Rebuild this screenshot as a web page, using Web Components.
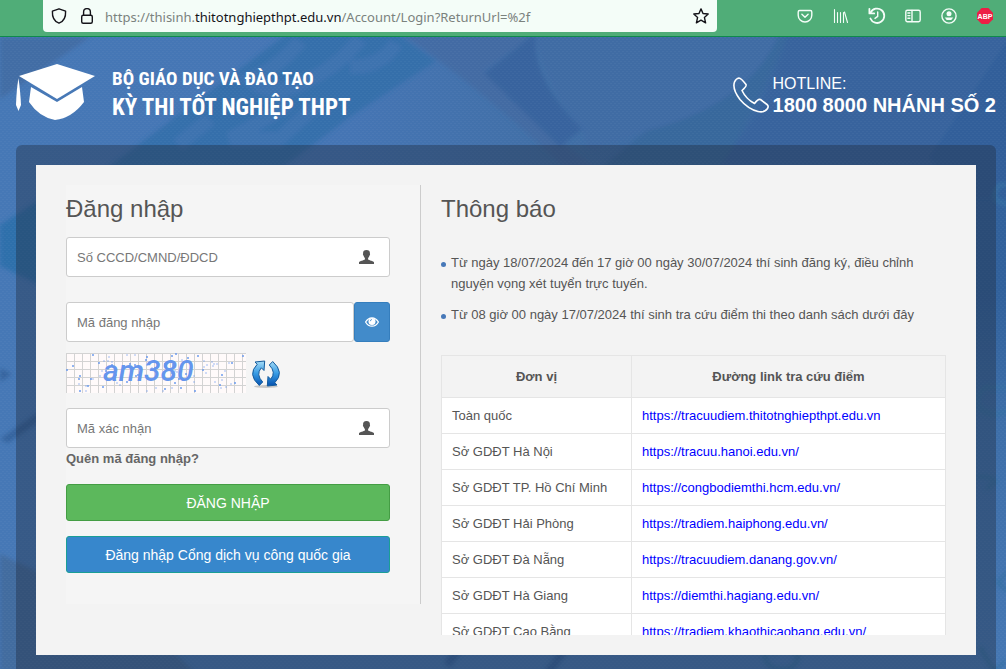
<!DOCTYPE html>
<html lang="vi">
<head>
<meta charset="utf-8">
<meta name="viewport" content="width=device-width, initial-scale=1">
<title>Kỳ thi tốt nghiệp THPT - Đăng nhập</title>
<style>
  html, body { margin: 0; height: 100%; }
  body {
    font: 13px/21px "Liberation Sans", Arial, sans-serif;
    color: #555;
    display: flex;
    flex-direction: column;
    overflow: hidden;
    --blue: #428bca;
    --line: #ccc;
  }
</style>
</head>
<body>
<browser-bar></browser-bar>
<exam-page>
  <site-header slot="header"></site-header>
  <login-form slot="login"></login-form>
  <notice-board slot="notice">
    <notice-item>Từ ngày 18/07/2024 đến 17 giờ 00 ngày 30/07/2024 thí sinh đăng ký, điều chỉnh nguyện vọng xét tuyển trực tuyến.</notice-item>
    <notice-item>Từ 08 giờ 00 ngày 17/07/2024 thí sinh tra cứu điểm thi theo danh sách dưới đây</notice-item>
    <score-links slot="links"></score-links>
  </notice-board>
</exam-page>

<script>
const define = (name, html, setup) => {
  customElements.define(name, class extends HTMLElement {
    constructor() {
      super();
      const t = document.createElement('template');
      t.innerHTML = html;
      this.attachShadow({ mode: 'open' }).append(t.content.cloneNode(true));
      if (setup) setup(this);
    }
  });
};

define('browser-bar', `
<style>
  :host { display: flex; align-items: flex-start; height: 36px; flex: none; padding-left: 43px;
    background: #50ad78; border-bottom: 1px solid #0f8a4c; box-sizing: content-box; }
  .url { flex: 1; min-width: 0; height: 32px; box-sizing: border-box; padding: 0 8px; display: flex; align-items: center; gap: 12px;
    background: #f4fdf8; border-radius: 0 0 4px 4px; color: #15141a; }
  .url svg { flex: none; }
  .text { flex: 1; min-width: 0; margin-left: -2px; padding-top: 2px; font: 13px/30px "Noto Sans", sans-serif; color: #7b827e; white-space: nowrap; overflow: hidden; }
  .text b { font-weight: 400; color: #15141a; }
  nav { flex: 0 0 289px; display: flex; justify-content: flex-end; align-items: center; gap: 16px; height: 32px; padding-right: 11px; box-sizing: border-box; }
  button { border: 0; padding: 0; background: none; width: 20px; height: 20px; display: grid; place-items: center; color: #f4fdf8; }
  svg { display: block; fill: none; stroke: currentColor; stroke-width: 1.4; stroke-linecap: round; stroke-linejoin: round; }
</style>
<div class="url">
  <svg width="16" height="16" viewBox="0 0 16 16"><path d="M8 .8 14.6 3.2C14.9 8.8 12.8 13.4 8 15.2 3.2 13.4 1.1 8.8 1.4 3.2Z"/></svg>
  <svg width="16" height="16" viewBox="0 0 16 16"><rect x="2.7" y="7.2" width="10.6" height="8" rx="1.5"/><path d="M4.6 7V4a3.4 3.4 0 0 1 6.8 0v3"/></svg>
  <span class="text">https://thisinh.<b>thitotnghiepthpt.edu.vn</b>/Account/Login?ReturnUrl=%2f</span>
  <svg width="16" height="16" viewBox="0 0 16 16"><path d="M8 .9 10 5.5 15.2 6 11.4 9.4 12.6 14.8 8 12.2 3.4 14.8 4.6 9.4.8 6 6 5.5Z"/></svg>
</div>
<nav aria-label="Trình duyệt">
  <button aria-label="Pocket"><svg width="16" height="16" viewBox="0 0 16 16"><path d="M2.6 2.5h10.8q1.4 0 1.4 1.4v3.3a6.8 6.8 0 0 1-13.6 0V3.9q0-1.4 1.4-1.4Z"/><path d="M4.9 6.3 8 9.3l3.1-3"/></svg></button>
  <button aria-label="Library"><svg width="16" height="16" viewBox="0 0 16 16"><path stroke-width="1.1" d="M1.500 1.500v13M4.500 4.500v10M7.500 4.500v10M10.500 4.500v10M11.500 4l3 10.500"/></svg></button>
  <button aria-label="History"><svg width="18" height="18" viewBox="0 0 18 18"><path stroke-width="1.8" d="M2.6 5.6A7.2 7.2 0 1 1 2.4 11.5"/><path stroke-width="1.8" d="M1.4 1.8v4.6h4.8"/><path d="M9.7 5v4.4L7 11.4"/></svg></button>
  <button aria-label="Sidebars"><svg width="16" height="16" viewBox="0 0 16 16"><rect x=".8" y="2.3" width="14.4" height="11.4" rx="1.6"/><path d="M7 2.5v11M2.9 5h2M2.9 7.6h2M2.9 10.2h2"/></svg></button>
  <button aria-label="Account"><svg width="16" height="16" viewBox="0 0 16 16"><circle cx="8" cy="8" r="7.1"/><circle cx="8" cy="5.8" r="2.5" fill="currentColor" stroke="none"/><path d="M3.7 9.4h8.6a4.6 4.2 0 0 1-8.6 0Z" fill="currentColor" stroke="none"/></svg></button>
  <button aria-label="Adblock Plus"><svg width="16" height="16" viewBox="0 0 16 16"><path d="M4.7 0h6.6L16 4.700v6.600L11.3 16H4.7L0 11.300V4.700Z" fill="#ed1e45" stroke="none"/><text x="8" y="10.600" text-anchor="middle" font-family="Liberation Sans, sans-serif" font-size="7" font-weight="700" fill="#fff" stroke="none">ABP</text></svg></button>
</nav>`);

define('photo-backdrop', `
<style>
  :host { display: block; position: absolute; inset: 0; z-index: -1; background: #4678b5; overflow: hidden; }
  svg { display: block; width: 100%; height: 100%; }
</style>
<svg viewBox="0 0 1006 632" preserveAspectRatio="xMidYMin slice" aria-hidden="true">
  <defs>
    <linearGradient id="base" x1="0" y1="0" x2="1" y2="0"><stop offset="0" stop-color="#4678b6"/><stop offset=".35" stop-color="#4575b4"/><stop offset=".55" stop-color="#416fa6"/><stop offset=".8" stop-color="#3a669f"/><stop offset="1" stop-color="#33629c"/></linearGradient>
    <linearGradient id="right" x1="0" y1="0" x2="0" y2="1"><stop offset="0" stop-color="#33629c"/><stop offset=".3" stop-color="#31619c"/><stop offset=".55" stop-color="#3e6fa9"/><stop offset="1" stop-color="#4678b4"/></linearGradient>
    <filter id="soft" x="-10%" y="-10%" width="120%" height="120%"><feGaussianBlur stdDeviation="2"/></filter>
    <pattern id="weave" width="4" height="4" patternUnits="userSpaceOnUse"><path d="M0 0h2v1H0zM2 2h2v1H2z" fill="#fff" opacity=".03"/></pattern>
  </defs>
  <rect width="1006" height="632" fill="url(#base)"/>
  <rect x="960" y="90" width="46" height="542" fill="url(#right)"/>
  <rect y="600" x="90" width="880" height="32" fill="#4677b2"/>
  <g filter="url(#soft)">
    <path d="M0 0H90L0 62Z" fill="#426a9f" opacity=".75"/>
    <path d="M288-4H396L436 24 350 80 270 140H95Z" fill="#316ea9" opacity=".85"/>
    <path d="M300 4q-22 28-50 38 24 22 60 0 30-14 50-40M290 66q-34 22-60 36h50q20-20 40-36M210 82l-32 26M396 6q-14 24-46 24" fill="none" stroke="#4676b3" stroke-width="15" opacity=".5"/>
    <path d="M400-4H536L484 34 510 62 600 136H570Q480 50 400-4Z" fill="#41699f" opacity=".7"/>
    <path d="M536-4Q530 40 582 92L560 110 484 36Z" fill="#39649e"/>
    <path d="M540-4H780Q750 68 646 94L590 114 582 92Q540 42 536-4Z" fill="#416ca4"/>
    <path d="M780-4Q750 68 646 94L590 140H720L760 60 790-4Z" fill="#39679c"/>
    <path d="M790-4H1010V60L940 130H720L760 70Z" fill="#39649d"/>
    <path d="M1010 0V160H960L930 120Z" fill="#315f9a"/>
    <path d="M0 188 44 160V250L0 229Z" fill="#2e6fab"/>
    <path d="M0 331 12 337 0 345ZM0 402 40 374V384L8 406Z" fill="#35649e"/>
    <path d="M0 517 40 536 165 606 195 636H0Z" fill="#426c9f"/>
    <path d="M462 608 447 628M568 608 548 636" stroke="#3663a0" stroke-width="8"/>
    <g fill="none" stroke="#366fa3" stroke-width="4"><path d="M765 608q-4 28 24 24 15-10 4-20-13-8-20 6M980 610l14 24 12-10M1008 350h-22q-12 8-8 20 12 12 30 4M976 440q14-2 20 5l-10 7M1008 148h-8q-14 14 8 20M1008 534l-10 12 10 8"/></g>
  </g>
  <rect width="1006" height="632" fill="url(#weave)"/>
</svg>`);

define('exam-page', `
<style>
  :host { display: block; position: relative; isolation: isolate; flex: 1; min-height: 0; overflow-y: auto; scrollbar-width: none; }
  main { margin: 0 10px 20px 16px; padding: 20px; border-radius: 6px; background: rgba(32,44,66,.4); }
  .sheet { display: grid; grid-template-columns: 355fr 505fr; column-gap: 20px; align-items: start; padding: 20px 30px; background: #f3f3f3; }
  @media (max-width: 760px) { .sheet { grid-template-columns: 1fr; } }
</style>
<photo-backdrop></photo-backdrop>
<slot name="header"></slot>
<main><div class="sheet"><slot name="login"></slot><slot name="notice"></slot></div></main>`);

define('site-header', `
<style>
  :host { display: flex; justify-content: space-between; align-items: center; min-height: 108px; padding: 2px 10px 0 16px; box-sizing: border-box; color: #fff; }
  .brand, .hotline { display: flex; align-items: center; }
  .brand { gap: 16px; }
  .hotline { gap: 4px; padding-top: 6px; }
  svg { display: block; flex: none; }
  h1 { margin: 0; padding-top: 4px; font: 700 23px/30px "Roboto Condensed", "Liberation Sans Narrow", "Liberation Sans", sans-serif; white-space: nowrap; }
  h1 small { display: block; font-size: 19px; line-height: 28px; }
  .hotline p { margin: 0; font-size: 16px; line-height: 20px; }
  .hotline strong { display: block; font-size: 20px; line-height: 22px; }
</style>
<div class="brand">
  <svg width="80" height="58" viewBox="0 0 80 58" fill="#fff" role="img" aria-label="Logo"><path d="M41 1 79 13 41 36 3 13Z"/><path d="M15 24 41 39 66 24 68 39Q56 55 39 57 23 54 13 39Z"/><path d="M2.500 15Q4.500 30 5 42L2.500 48 0 42Q.500 26 2.500 15Z"/></svg>
  <h1><small>BỘ GIÁO DỤC VÀ ĐÀO TẠO</small>KỲ THI TỐT NGHIỆP THPT</h1>
</div>
<div class="hotline">
  <svg width="36" height="36" viewBox="0 0 36 36" fill="none" stroke="#fff" stroke-width="1.600" stroke-linejoin="round" role="img" aria-label="Điện thoại"><path d="M6 1Q8 1 13 7.500 14 9 9 13.500 13 22 21.500 26.500 25 21.500 27.500 22.500L34 27.500Q36 29 34.500 31.500 31.500 36 25 34.500 15 32 7 22.500-1 12 1.500 5 3 1.500 6 1Z"/></svg>
  <p>HOTLINE:<strong>1800 8000 NHÁNH SỐ 2</strong></p>
</div>`);

define('icon-user', `
<style>:host { display: block; width: 15px; height: 14px; } svg { display: block; }</style>
<svg width="15" height="14" viewBox="0 0 15 14" fill="#555" aria-hidden="true"><path d="M7.500 0C10 0 11.200 1.500 10.900 3.800 11.300 4.200 11 5.500 10.300 5.900 10 7 9.400 7.600 9.100 8V9.400C10 10.300 14.500 10.800 15 12.200V14H0V12.200C.500 10.800 5 10.300 5.900 9.400V8C5.600 7.600 5 7 4.700 5.900 4 5.500 3.700 4.200 4.100 3.800 3.800 1.500 5 0 7.500 0Z"/></svg>`);

define('captcha-image', `
<style>:host { display: block; width: 180px; height: 40px; } svg { display: block; }</style>
<svg width="180" height="40" viewBox="0 0 180 40" role="img" aria-label="Mã xác nhận">
  <defs><pattern id="grid" width="8" height="8" patternUnits="userSpaceOnUse"><path d="M0 0h8v1H1v7H0z" fill="#d3d3d3"/></pattern></defs>
  <rect width="180" height="40" fill="#fffafa"/><rect width="180" height="40" fill="url(#grid)"/>
  <g id="specks" fill="#6495ed"></g>
  <text x="37" y="28" font-family="Roboto, sans-serif" font-size="30" font-style="italic" font-weight="500" fill="#6495ed">am380</text>
</svg>`, host => {
  // Pseudo-random specks from a fixed seed, as sprinkled by the captcha generator
  let s = 7, out = '';
  const r = n => (s = (s * 1103515245 + 12345) % 2147483648) / 2147483648 * n;
  for (let i = 0; i < 85; i++) {
    const x = Math.floor(r(178)), y = Math.floor(r(38)), o = i % 2 ? '.3' : '.7';
    out += `<rect x="${x}" y="${y}" width="2" height="2" opacity="${o}"/>`;
  }
  host.shadowRoot.querySelector('#specks').innerHTML = out;
});

define('login-form', `
<style>
  :host { display: block; background: #f5f5f5; border-right: 1px solid var(--line); padding: 8px 30px 31px 0; }
  h2 { margin: 0 0 12px; font-size: 24px; line-height: 32px; font-weight: 400; }
  form { display: flex; flex-direction: column; }
  .field { display: flex; align-items: center; height: 40px; box-sizing: border-box; border: 1px solid var(--line); border-radius: 3px; background: #fff; padding-right: 15px; }
  input { flex: 1; min-width: 0; height: 100%; box-sizing: border-box; border: 0; outline: 0; background: none; padding: 0 10px; font: inherit; color: #555; }
  input::placeholder { color: #777; opacity: 1; }
  .group { display: flex; margin: 25px 0 11px; }
  .group .field { flex: 1; padding: 0; border-radius: 3px; }
  .eye { width: 36px; padding: 0; display: grid; place-items: center; background: var(--blue); border: 1px solid #357ebd; border-radius: 3px; }
  .captcha { display: flex; align-items: center; gap: 4px; margin-bottom: 15px; }
  .reload { border: 0; background: none; padding: 0; }
  svg { display: block; }
  .forgot { align-self: flex-start; color: #666; font-weight: 700; text-decoration: none; margin-bottom: 15px; }
  .submit { height: 37px; border: 1px solid #449d44; border-radius: 3px; background: #5cb85c; color: #fff; font: 14px/20px "Liberation Sans", Arial, sans-serif; }
  .portal { margin-top: 15px; background: #3787cc; border-color: #1a9e96; }
</style>
<h2>Đăng nhập</h2>
<form onsubmit="return false">
  <div class="field"><input type="text" aria-label="Số CCCD/CMND/ĐDCD" placeholder="Số CCCD/CMND/ĐDCD"><icon-user></icon-user></div>
  <div class="group">
    <div class="field"><input type="password" aria-label="Mã đăng nhập" placeholder="Mã đăng nhập"></div>
    <button class="eye" type="button" aria-label="Hiện mã đăng nhập"><svg width="14" height="10" viewBox="0 0 14 10" fill="none" stroke="#fff"><path d="M.6 5Q3 .8 7 .8T13.400 5Q11 9.200 7 9.200T.6 5Z" stroke-width="1.300"/><circle cx="7" cy="4.400" r="3.500" fill="#fff" stroke="none"/><path d="M5.300 4.200Q5.300 2.600 7 2.500" stroke="#428bca" stroke-width=".8"/></svg></button>
  </div>
  <div class="captcha">
    <captcha-image></captcha-image>
    <button class="reload" type="button" aria-label="Đổi mã xác nhận"><svg width="32" height="32" viewBox="0 0 32 32">
      <defs><linearGradient id="g" gradientUnits="userSpaceOnUse" x1="0" y1="4" x2="0" y2="29"><stop offset="0" stop-color="#a6dcf6"/><stop offset=".5" stop-color="#379be4"/><stop offset="1" stop-color="#0450ae"/></linearGradient></defs>
      <ellipse cx="16" cy="29.500" rx="12" ry="1.500" fill="#999" opacity=".5"/>
      <g fill="url(#g)" stroke="#145a9c" stroke-width="1" stroke-linejoin="round">
        <path d="M5 5 14.700 4 14 13.500 11.300 10.800Q5.500 17.500 12.700 25L9.300 28.500Q-3 17.500 7.200 7.300Z"/>
        <path d="M27 28 17.300 29 18 19.500 20.700 22.200Q26.500 15.500 19.300 8L22.700 4.500Q35 15.500 24.800 25.700Z"/>
      </g>
    </svg></button>
  </div>
  <div class="field"><input type="text" aria-label="Mã xác nhận" placeholder="Mã xác nhận"><icon-user></icon-user></div>
  <a class="forgot" href="#">Quên mã đăng nhập?</a>
  <button class="submit">ĐĂNG NHẬP</button>
  <button class="submit portal" type="button">Đăng nhập Cổng dịch vụ công quốc gia</button>
</form>`);

define('notice-item', `
<style>
  :host { display: flex; gap: 5px; }
  i { flex: none; width: 5px; height: 5px; margin-top: 10px; border-radius: 50%; background: #4678b8; }
</style>
<i></i><span><slot></slot></span>`);

define('notice-board', `
<style>
  :host { display: block; min-width: 0; padding-top: 8px; }
  h2 { margin: 0 0 27px; font-size: 24px; line-height: 32px; font-weight: 400; }
  .list { display: flex; flex-direction: column; gap: 10px; margin-bottom: 30px; }
</style>
<h2>Thông báo</h2>
<div class="list"><slot></slot></div>
<slot name="links"></slot>`);

define('score-links', `
<style>
  :host { display: block; height: 280px; overflow-y: auto; scrollbar-width: none; }
  table { width: 100%; border-collapse: collapse; table-layout: fixed; background: #fff; }
  col:first-child { width: 190px; }
  th, td { border: 1px solid #e5e5e5; padding: 7px 10px; text-align: left; }
  th { background: #f3f3f3; text-align: center; padding: 10px; }
  a { color: #00f; text-decoration: none; }
</style>
<table>
  <colgroup><col><col></colgroup>
  <thead><tr><th>Đơn vị</th><th>Đường link tra cứu điểm</th></tr></thead>
  <tbody></tbody>
</table>`, host => {
  const rows = [
    ['Toàn quốc', 'https://tracuudiem.thitotnghiepthpt.edu.vn'],
    ['Sở GDĐT Hà Nội', 'https://tracuu.hanoi.edu.vn/'],
    ['Sở GDĐT TP. Hồ Chí Minh', 'https://congbodiemthi.hcm.edu.vn/'],
    ['Sở GDĐT Hải Phòng', 'https://tradiem.haiphong.edu.vn/'],
    ['Sở GDĐT Đà Nẵng', 'https://tracuudiem.danang.gov.vn/'],
    ['Sở GDĐT Hà Giang', 'https://diemthi.hagiang.edu.vn/'],
    ['Sở GDĐT Cao Bằng', 'https://tradiem.khaothicaobang.edu.vn/']
  ];
  host.shadowRoot.querySelector('tbody').innerHTML =
    rows.map(([unit, url]) => `<tr><td>${unit}</td><td><a href="${url}">${url}</a></td></tr>`).join('');
});
</script>
</body>
</html>
